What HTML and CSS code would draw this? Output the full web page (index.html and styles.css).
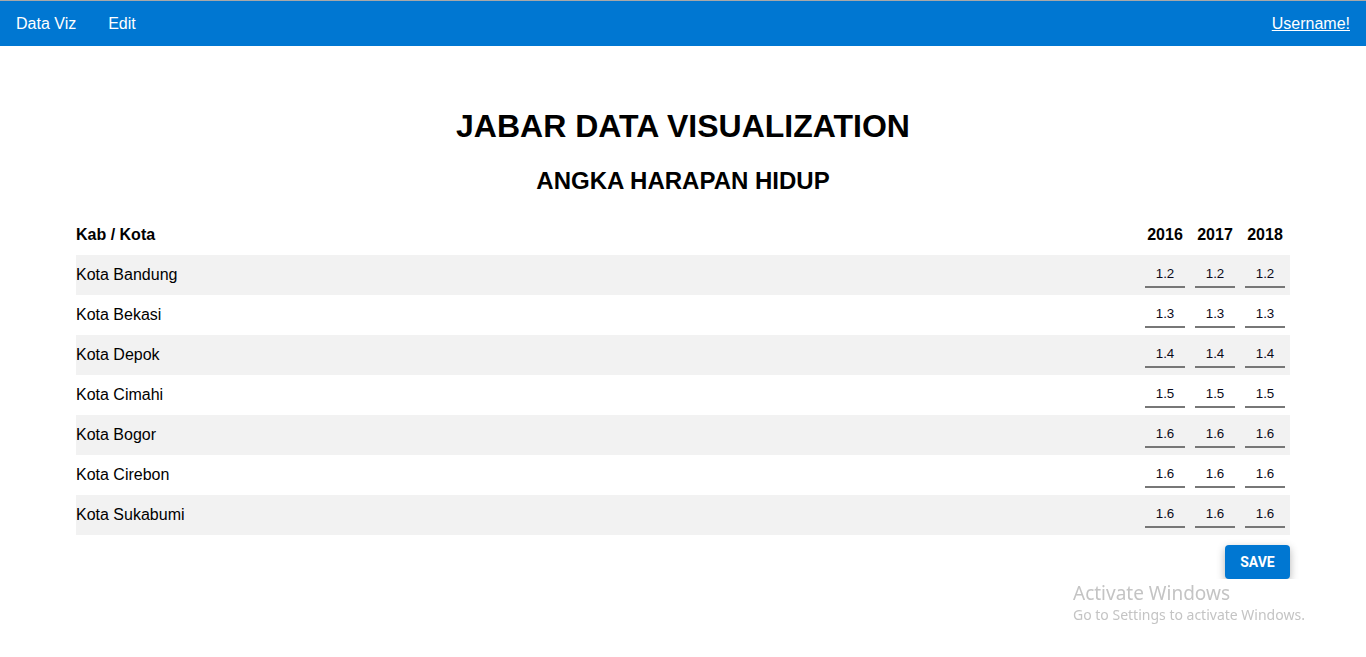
FILE: index.html
```html
<!DOCTYPE html>
<html>
<head>
<meta charset="utf-8">
<link rel="stylesheet" href="styles.css">
</head>
<body>
<nav class="navbar">
  <div class="nav-left">
    <a class="nav-link">Data Viz</a>
    <a class="nav-link">Edit</a>
  </div>
  <a class="nav-user">Username!</a>
</nav>
<main class="main">
  <h1 class="title">JABAR DATA VISUALIZATION</h1>
  <h2 class="subtitle">ANGKA HARAPAN HIDUP</h2>
  <table class="data-table">
    <thead>
      <tr><th class="name-col">Kab / Kota</th><th class="yr">2016</th><th class="yr">2017</th><th class="yr">2018</th></tr>
    </thead>
    <tbody>
      <tr><td class="name-col">Kota Bandung</td><td class="yr"><input class="val" value="1.2"></td><td class="yr"><input class="val" value="1.2"></td><td class="yr"><input class="val" value="1.2"></td></tr>
      <tr><td class="name-col">Kota Bekasi</td><td class="yr"><input class="val" value="1.3"></td><td class="yr"><input class="val" value="1.3"></td><td class="yr"><input class="val" value="1.3"></td></tr>
      <tr><td class="name-col">Kota Depok</td><td class="yr"><input class="val" value="1.4"></td><td class="yr"><input class="val" value="1.4"></td><td class="yr"><input class="val" value="1.4"></td></tr>
      <tr><td class="name-col">Kota Cimahi</td><td class="yr"><input class="val" value="1.5"></td><td class="yr"><input class="val" value="1.5"></td><td class="yr"><input class="val" value="1.5"></td></tr>
      <tr><td class="name-col">Kota Bogor</td><td class="yr"><input class="val" value="1.6"></td><td class="yr"><input class="val" value="1.6"></td><td class="yr"><input class="val" value="1.6"></td></tr>
      <tr><td class="name-col">Kota Cirebon</td><td class="yr"><input class="val" value="1.6"></td><td class="yr"><input class="val" value="1.6"></td><td class="yr"><input class="val" value="1.6"></td></tr>
      <tr><td class="name-col">Kota Sukabumi</td><td class="yr"><input class="val" value="1.6"></td><td class="yr"><input class="val" value="1.6"></td><td class="yr"><input class="val" value="1.6"></td></tr>
    </tbody>
  </table>
  <div class="actions">
    <button class="save-btn">SAVE</button>
  </div>
</main>
<div class="watermark">
  <div class="wm-title">Activate Windows</div>
  <div class="wm-sub">Go to Settings to activate Windows.</div>
</div>
</body>
</html>
```
FILE: styles.css
```css
html, body {
  margin: 0;
  padding: 0;
  background: #fff;
  font-family: "Liberation Sans", Arial, sans-serif;
  color: #000;
}
body {
  border-top: 1px solid #a8a8a8;
}
.navbar {
  height: 45px;
  background: #0077d2;
  display: flex;
  align-items: center;
  justify-content: space-between;
  padding: 0 16px;
}
.nav-left {
  display: flex;
  gap: 32px;
}
.nav-link {
  color: #fff;
  font-size: 16px;
}
.nav-user {
  color: #fff;
  font-size: 16px;
  text-decoration: underline;
}
.main {
  padding: 0 76px;
}
.title {
  margin: 0;
  padding-top: 62px;
  text-align: center;
  font-size: 32px;
  line-height: 37px;
  font-weight: bold;
}
.subtitle {
  margin: 0;
  padding-top: 22px;
  text-align: center;
  font-size: 24px;
  line-height: 28px;
  font-weight: bold;
}
.data-table {
  width: 100%;
  border-collapse: collapse;
  margin-top: 20px;
}
.data-table th {
  font-size: 16px;
  font-weight: bold;
  height: 40px;
  padding: 0;
}
.data-table td {
  font-size: 16px;
  height: 40px;
  padding: 0;
}
.data-table tbody tr:nth-child(odd) {
  background: #f2f2f2;
}
.name-col {
  text-align: left;
}
.yr {
  width: 50px;
  text-align: center;
}
.data-table td.yr {
  padding: 0 5px;
  box-sizing: border-box;
}
.val {
  width: 40px;
  box-sizing: border-box;
  border: none;
  border-bottom: 2px solid #777;
  background: transparent;
  font-family: "Liberation Sans", Arial, sans-serif;
  font-size: 13.333px;
  color: #0a0a1a;
  text-align: center;
  padding: 1px 0 5px;
  margin-top: 2px;
  outline: none;
  display: block;
}
.actions {
  display: flex;
  justify-content: flex-end;
  padding-top: 10px;
}
.save-btn {
  background: #0077d2;
  color: #fff;
  border: none;
  border-radius: 4px;
  width: 65px;
  height: 34px;
  font-family: Roboto, "Liberation Sans", sans-serif;
  font-weight: bold;
  font-size: 14px;
  box-shadow: 0 3px 8px rgba(0,0,0,0.3);
}
.watermark {
  position: fixed;
  left: 1073px;
  top: 581px;
  color: #c4c4c4;
  font-family: "Noto Sans", "Open Sans", sans-serif;
}
.wm-title {
  font-size: 19px;
  line-height: 24px;
}
.wm-sub {
  font-size: 14px;
  line-height: 20px;
}
```
